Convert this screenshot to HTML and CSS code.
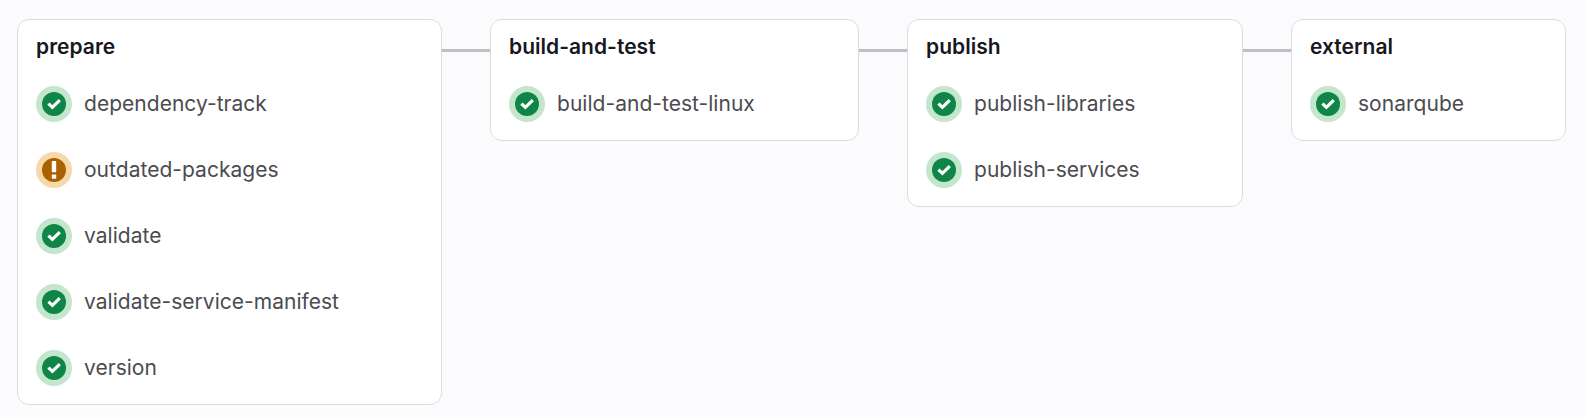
FILE: index.html
```html
<!DOCTYPE html>
<html lang="en">
<head>
<meta charset="utf-8">
<title>Pipeline</title>
<link rel="stylesheet" href="styles.css">
</head>
<body>
<svg class="symbols" width="0" height="0" aria-hidden="true">
  <symbol id="success" viewBox="0 0 36 36">
    <circle cx="18" cy="18" r="18" fill="#c3e6cd"/>
    <circle cx="18" cy="18" r="12" fill="#108548"/>
    <path d="M12.4 17.6 L16.4 21.4 L23.8 14.2" fill="none" stroke="#fff" stroke-width="3.2"/>
  </symbol>
  <symbol id="warning" viewBox="0 0 36 36">
    <circle cx="18" cy="18" r="18" fill="#f5d9a8"/>
    <circle cx="18" cy="18" r="12" fill="#ab6100"/>
    <rect x="15.8" y="9" width="4.4" height="11.2" rx=".8" fill="#fff"/>
    <rect x="15.8" y="22.4" width="4.4" height="4.4" rx=".8" fill="#fff"/>
  </symbol>
</svg>
<main class="pipeline">
  <section class="stage stage-prepare">
    <h2 class="stage-title">prepare</h2>
    <ul class="jobs">
      <li class="job"><svg class="icon"><use href="#success"/></svg><span>dependency-track</span></li>
      <li class="job"><svg class="icon"><use href="#warning"/></svg><span>outdated-packages</span></li>
      <li class="job"><svg class="icon"><use href="#success"/></svg><span>validate</span></li>
      <li class="job"><svg class="icon"><use href="#success"/></svg><span>validate-service-manifest</span></li>
      <li class="job"><svg class="icon"><use href="#success"/></svg><span>version</span></li>
    </ul>
  </section>
  <div class="link"></div>
  <section class="stage stage-build">
    <h2 class="stage-title">build-and-test</h2>
    <ul class="jobs">
      <li class="job"><svg class="icon"><use href="#success"/></svg><span>build-and-test-linux</span></li>
    </ul>
  </section>
  <div class="link"></div>
  <section class="stage stage-publish">
    <h2 class="stage-title">publish</h2>
    <ul class="jobs">
      <li class="job"><svg class="icon"><use href="#success"/></svg><span>publish-libraries</span></li>
      <li class="job"><svg class="icon"><use href="#success"/></svg><span>publish-services</span></li>
    </ul>
  </section>
  <div class="link"></div>
  <section class="stage stage-external">
    <h2 class="stage-title">external</h2>
    <ul class="jobs">
      <li class="job"><svg class="icon"><use href="#success"/></svg><span>sonarqube</span></li>
    </ul>
  </section>
</main>
</body>
</html>
```
FILE: styles.css
```css
* { box-sizing: border-box; }
body {
  margin: 0;
  background: #fbfafd;
  font-family: Inter, "Liberation Sans", sans-serif;
  font-size: 21px;
  line-height: 30px;
  letter-spacing: 0.03px;
  color: #4c4b51;
}
.symbols { position: absolute; }
.pipeline {
  display: flex;
  align-items: flex-start;
  padding: 19px 0 0 17px;
}
.stage {
  flex: none;
  padding: 12px 18px 18px;
  background: #fff;
  border: 1px solid #dcdcde;
  border-radius: 12px;
}
.stage-prepare { width: 425px; }
.stage-build { width: 369px; }
.stage-publish { width: 336px; }
.stage-external { width: 275px; }
.link {
  flex: none;
  width: 48px;
  height: 3px;
  margin-top: 30px;
  background: #bfbfc3;
}
.stage-title {
  margin: 0 0 24px;
  font-size: 21px;
  line-height: 30px;
  font-weight: 640;
  color: #18171d;
}
.jobs {
  display: flex;
  flex-direction: column;
  gap: 30px;
  margin: 0;
  padding: 0;
  list-style: none;
}
.job {
  display: flex;
  align-items: center;
  gap: 12px;
  height: 36px;
}
.icon {
  flex: none;
  width: 36px;
  height: 36px;
}
```
